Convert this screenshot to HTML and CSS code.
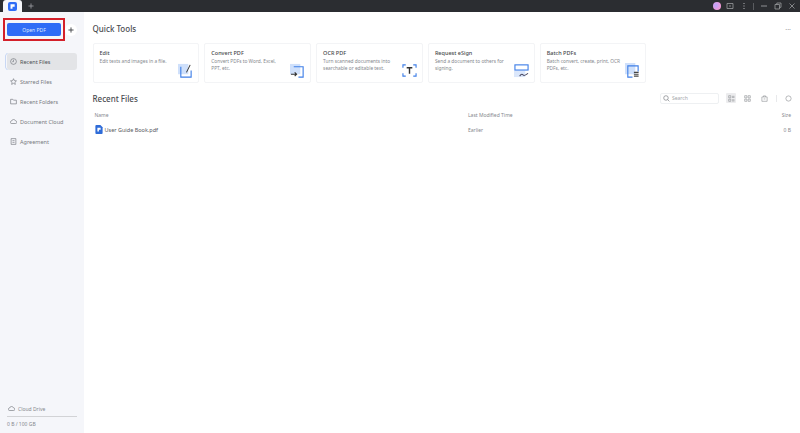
FILE: index.html
```html
<!DOCTYPE html>
<html lang="en">
<head>
    <meta charset="UTF-8">
    <meta name="viewport" content="width=device-width, initial-scale=1.0">
    <title>PDF - Home</title>
    <link rel="stylesheet" href="styles.css">
</head>
<body>
    <!-- TITLE BAR -->
    <header class="titlebar">
        <div class="tab">
            <svg class="logo" viewBox="0 0 10 10"><rect width="10" height="10" rx="2.2" fill="#2f6cf6"/><path d="M2.8 2.4h4.600v3H5v2.200H2.800z" fill="#fff"/></svg>
        </div>
        <svg class="newtab" viewBox="0 0 7 7"><path d="M3.500 .5v6M.5 3.500h6" stroke="#9a9ca0" fill="none"/></svg>
        <div class="winbtns">
            <span class="avatar"></span>
            <svg viewBox="0 0 8 8"><path d="M1 1.500h6v5H1zM3 4h2" stroke="#a8aaae" stroke-width=".7" fill="none"/></svg>
            <svg viewBox="0 0 8 8"><path d="M4 1v1M4 3.500v1M4 6v1" stroke="#b5b7ba" fill="none"/></svg>
            <span class="winsep"></span>
            <svg viewBox="0 0 8 8"><path d="M1 4h6" stroke="#a8aaae" stroke-width=".8"/></svg>
            <svg viewBox="0 0 8 8"><path d="M1 2.500h4.500V7H1zM2.800 2.500V1H7v4.300H5.500" stroke="#a8aaae" stroke-width=".7" fill="none"/></svg>
            <svg viewBox="0 0 8 8"><path d="M1.500 1.500l5 5M6.500 1.500l-5 5" stroke="#a8aaae" stroke-width=".7"/></svg>
        </div>
    </header>

    <div class="app">
        <!-- SIDEBAR -->
        <aside class="sidebar">
            <div class="opentop">
                <div class="redbox"><button class="openbtn">Open PDF</button></div>
                <span class="plus"><svg viewBox="0 0 7 7"><path d="M3.500 .5v6M.5 3.500h6" stroke="#45474b" stroke-width="1.100" fill="none"/></svg></span>
            </div>
            <nav class="menu">
                <a class="item active">
                    <svg viewBox="0 0 8 8"><circle cx="4" cy="4" r="3.300"/><path d="M4 2v2.200h-1.500"/></svg>Recent Files
                </a>
                <a class="item">
                    <svg viewBox="0 0 8 8"><path d="M4 .8l1 2.200 2.400.3-1.800 1.600.5 2.400L4 6.100 1.900 7.300l.5-2.400L.6 3.300 3 3z"/></svg>Starred Files
                </a>
                <a class="item">
                    <svg viewBox="0 0 8 8"><path d="M.7 1.500h2.500l.8 1h3.300v4.200H.7z"/></svg>Recent Folders
                </a>
                <a class="item">
                    <svg viewBox="0 0 8 8"><path d="M2 6.300h4.200a1.500 1.500 0 0 0 .2-3A2.500 2.500 0 0 0 1.700 3.500 1.400 1.400 0 0 0 2 6.300z"/></svg>Document Cloud
                </a>
                <a class="item">
                    <svg viewBox="0 0 8 8"><path d="M1.300.7h5.400v6.600H1.300zM2.800 3h2.400M2.800 5h2.400"/></svg>Agreement
                </a>
            </nav>
            <div class="drive">
                <div class="drivename">
                    <svg viewBox="0 0 8 8"><path d="M2 6.300h4.200a1.500 1.500 0 0 0 .2-3A2.500 2.500 0 0 0 1.700 3.500 1.400 1.400 0 0 0 2 6.300z"/></svg>Cloud Drive
                </div>
                <div class="drivebar"></div>
                <div class="driveused">0 B / 100 GB</div>
            </div>
        </aside>

        <!-- MAIN -->
        <main class="main">
            <div class="headrow">
                <h2>Quick Tools</h2>
                <span class="more">···</span>
            </div>
            <section class="cards">
                <div class="card">
                    <h3>Edit</h3>
                    <p>Edit texts and images in a file.</p>
                    <svg class="cardicon" viewBox="0 0 16 16"><rect x="0" y="1" width="11" height="11" fill="#cfe0fb"/><path d="M3 4v11h11V8" stroke="#3f7fe8" stroke-width="1.200" fill="none"/><path d="M9 10L13 2" stroke="#333" stroke-width="1.100"/></svg>
                </div>
                <div class="card">
                    <h3>Convert PDF</h3>
                    <p>Convert PDFs to Word, Excel, PPT, etc.</p>
                    <svg class="cardicon" viewBox="0 0 16 16"><rect x="0" y="1" width="11" height="11" fill="#cfe0fb"/><path d="M4 4h10v11H9" stroke="#3f7fe8" stroke-width="1.200" fill="none"/><path d="M1 12h6M5 10l2 2-2 2" stroke="#333" stroke-width="1.200" fill="none"/></svg>
                </div>
                <div class="card">
                    <h3>OCR PDF</h3>
                    <p>Turn scanned documents into searchable or editable text.</p>
                    <svg class="cardicon" viewBox="0 0 16 16"><path d="M1 5V2h3M12 2h3v3M15 11v3h-3M4 14H1v-3" stroke="#3f7fe8" stroke-width="1.200" fill="none"/><path d="M5 5h6M8 5v6.500" stroke="#333" stroke-width="1.500" fill="none"/></svg>
                </div>
                <div class="card">
                    <h3>Request eSign</h3>
                    <p>Send a document to others for signing.</p>
                    <svg class="cardicon" viewBox="0 0 16 16"><rect x="0" y="8" width="12" height="7" fill="#dbe7fb"/><rect x="1" y="2" width="14" height="5.500" fill="#fff" stroke="#3f7fe8" stroke-width="1.200"/><path d="M6 14c2-3 3-2 4-1s2 0 5-2" stroke="#4a4a63" stroke-width="1.100" fill="none"/></svg>
                </div>
                <div class="card">
                    <h3>Batch PDFs</h3>
                    <p>Batch convert, create, print, OCR PDFs, etc.</p>
                    <svg class="cardicon" viewBox="0 0 16 16"><rect x="0" y="0" width="11" height="12" fill="#cfe0fb"/><path d="M8 15H3V3h11v6" stroke="#3f7fe8" stroke-width="1.200" fill="none"/><path d="M9.500 10h5M9.500 12h5M9.500 14h5" stroke="#444" stroke-width="1.200"/></svg>
                </div>
            </section>

            <div class="headrow recent">
                <h2>Recent Files</h2>
                <div class="tools">
                    <div class="search">
                        <svg viewBox="0 0 8 8"><circle cx="3.400" cy="3.400" r="2.600"/><path d="M5.300 5.300l2 2"/></svg>Search
                    </div>
                    <span class="tool on"><svg viewBox="0 0 8 8"><path d="M.8.8h2.400v2.400H.8zM.8 4.800h2.400v2.400H.8zM4.600 1.500h2.800M4.600 2.800h2.800M4.600 5.500h2.800M4.600 6.800h2.800"/></svg></span>
                    <span class="tool"><svg viewBox="0 0 8 8"><path d="M.8.8h2.500v2.500H.8zM4.700.8h2.500v2.500H4.700zM.8 4.700h2.500v2.500H.8zM4.700 4.700h2.500v2.500H4.700z"/></svg></span>
                    <span class="tool"><svg viewBox="0 0 8 8"><path d="M1 2.200h6v5H1zM2.800 2.200V1h2.400v1.200M3 4.500h2"/></svg></span>
                    <span class="toolsep"></span>
                    <span class="tool"><svg viewBox="0 0 8 8"><circle cx="4" cy="4" r="3"/></svg></span>
                </div>
            </div>

            <div class="filerow filehead">
                <span>Name</span>
                <span>Last Modified Time</span>
                <span class="size">Size</span>
            </div>
            <div class="filerow">
                <span class="fname">
                    <svg viewBox="0 0 8 10"><path d="M1 0h4.500L8 2.500V9a1 1 0 0 1-1 1H1a1 1 0 0 1-1-1V1a1 1 0 0 1 1-1z" fill="#2f6cd8"/><path d="M2.200 3h3.600v2.400H3.900v1.900H2.200z" fill="#fff"/></svg>
                    User Guide Book.pdf
                </span>
                <span>Earlier</span>
                <span class="size">0 B</span>
            </div>
        </main>
    </div>
</body>
</html>
```

FILE: styles.css
```css
* {box-sizing: border-box;}

html, body {
    height: 100%;
    margin: 0;
}

body {
    display: flex;
    flex-direction: column;
    background: #fff;
    color: #55585e;
    font-family: "Noto Sans", sans-serif;
    font-size: 5px;
    overflow: hidden;
}

/* TITLE BAR */
.titlebar {
    display: flex;
    align-items: center;
    flex: none;
    height: 12px;
    background: #2b2d31;
}

.tab {
    display: flex;
    align-items: center;
    justify-content: center;
    width: 19px;
    height: 12px;
    margin-left: 3px;
    background: #f5f6fa;
    border-radius: 3px 3px 0 0;
}

.logo {
    width: 9px;
    height: 9px;
}

.newtab {
    width: 6px;
    height: 6px;
    margin-left: 6px;
}

.winbtns {
    display: flex;
    align-items: center;
    gap: 6px;
    margin-left: auto;
    padding-right: 4px;
}

.winbtns svg {
    width: 8px;
    height: 8px;
}

.avatar {
    width: 8px;
    height: 8px;
    margin-right: -1px;
    border-radius: 50%;
    background: radial-gradient(circle at 35% 40%, #b9a6ff, #f39ad8 70%);
}

.winsep {
    width: 1px;
    height: 7px;
    margin-left: -1px;
    background: #5a5c60;
}

/* SIDEBAR */
.app {
    display: flex;
    flex: 1;
    min-height: 0;
}

.sidebar {
    display: flex;
    flex-direction: column;
    flex: none;
    width: 84px;
    background: #f5f6fa;
}

.opentop {
    display: flex;
    align-items: center;
    margin: 6px 0 0 3px;
}

.redbox {
    width: 62px;
    height: 23px;
    padding: 3px 2px;
    border: 2px solid #d4202a;
}

.openbtn {
    display: block;
    width: 100%;
    height: 100%;
    padding: 0;
    border: 0;
    border-radius: 2px;
    background: #2f6cf6;
    color: #dfe8ff;
    font: 5px "Noto Sans", sans-serif;
}

.plus {
    display: flex;
    align-items: center;
    justify-content: center;
    width: 12px;
    height: 12px;
    border-radius: 50%;
    background: #fff;
}

.plus svg {
    width: 6px;
    height: 6px;
}

.menu {
    display: flex;
    flex-direction: column;
    margin: 12px 7px 0;
}

.item {
    display: flex;
    align-items: center;
    gap: 3px;
    height: 17px;
    margin-bottom: 3px;
    padding-left: 3px;
    border-radius: 3px;
    color: #777a80;
    font-size: 5.500px;
}

.item svg, .drivename svg, .search svg {
    width: 7px;
    height: 7px;
    stroke: #6b6e74;
    stroke-width: .7;
    fill: none;
}

.item.active {
    background: #e3e4e7;
    color: #4c4e53;
    box-shadow: -1px 0 0 #f5f6fa, -1.500px 0 0 #9bb8ee;
}

.drive {
    margin: auto 7px 6px;
    color: #85888e;
    font-size: 5px;
}

.drivename {
    display: flex;
    align-items: center;
    gap: 3px;
    padding-left: 1px;
}

.drivebar {
    height: 1px;
    margin: 4px 0;
    background: #d2d3d6;
}

/* MAIN */
.main {
    flex: 1;
    min-width: 0;
    padding: 0 9px 0 8.500px;
}

.headrow {
    display: flex;
    align-items: center;
    justify-content: space-between;
    height: 14px;
    margin-top: 9px;
}

h2 {
    margin: 0;
    color: #4a4c50;
    font-size: 8px;
    font-weight: 500;
}

.more {
    padding-top: 3px;
    color: #9a9ca0;
    font-size: 7px;
}

.cards {
    display: flex;
    gap: 5px;
    margin-top: 8px;
}

.card {
    position: relative;
    width: 106.800px;
    height: 40px;
    padding: 5px 6px;
    border: 1px solid #f3f4f6;
    border-radius: 2px;
}

.card h3 {
    margin: 0 0 1px;
    color: #45474b;
    font-size: 5.500px;
    font-weight: 500;
    line-height: 8px;
}

.card p {
    width: 74px;
    margin: 0;
    color: #85888e;
    font-size: 4.800px;
    line-height: 6.500px;
}

.cardicon {
    position: absolute;
    right: 5px;
    bottom: 4px;
    width: 15px;
    height: 15px;
}

.recent {
    margin-top: 8px;
}

.tools {
    display: flex;
    align-items: center;
    gap: 6.500px;
    margin-right: -2px;
}

.search {
    display: flex;
    align-items: center;
    gap: 2px;
    width: 59px;
    height: 11px;
    margin-right: .5px;
    padding-left: 2px;
    border: 1px solid #eef0f2;
    border-radius: 2px;
    color: #a4a6aa;
}

.tool {
    display: flex;
    align-items: center;
    justify-content: center;
    width: 10px;
    height: 10px;
    border-radius: 1px;
}

.tool svg {
    width: 7px;
    height: 7px;
    stroke: #8d9094;
    stroke-width: .7;
    fill: none;
}

.tool.on {
    background: #ececee;
}

.toolsep {
    width: 1px;
    height: 7px;
    background: #e8e9eb;
}

/* FILE LIST */
.filerow {
    display: grid;
    grid-template-columns: 373.500px 1fr auto;
    align-items: center;
    height: 15px;
    padding-left: 2px;
    color: #85888e;
}

.filehead {
    margin-top: 2px;
}

.fname {
    display: flex;
    align-items: center;
    gap: 2px;
    color: #55585e;
    font-size: 5.500px;
}

.fname svg {
    width: 8px;
    height: 9px;
}

.size {
    text-align: right;
}
```
